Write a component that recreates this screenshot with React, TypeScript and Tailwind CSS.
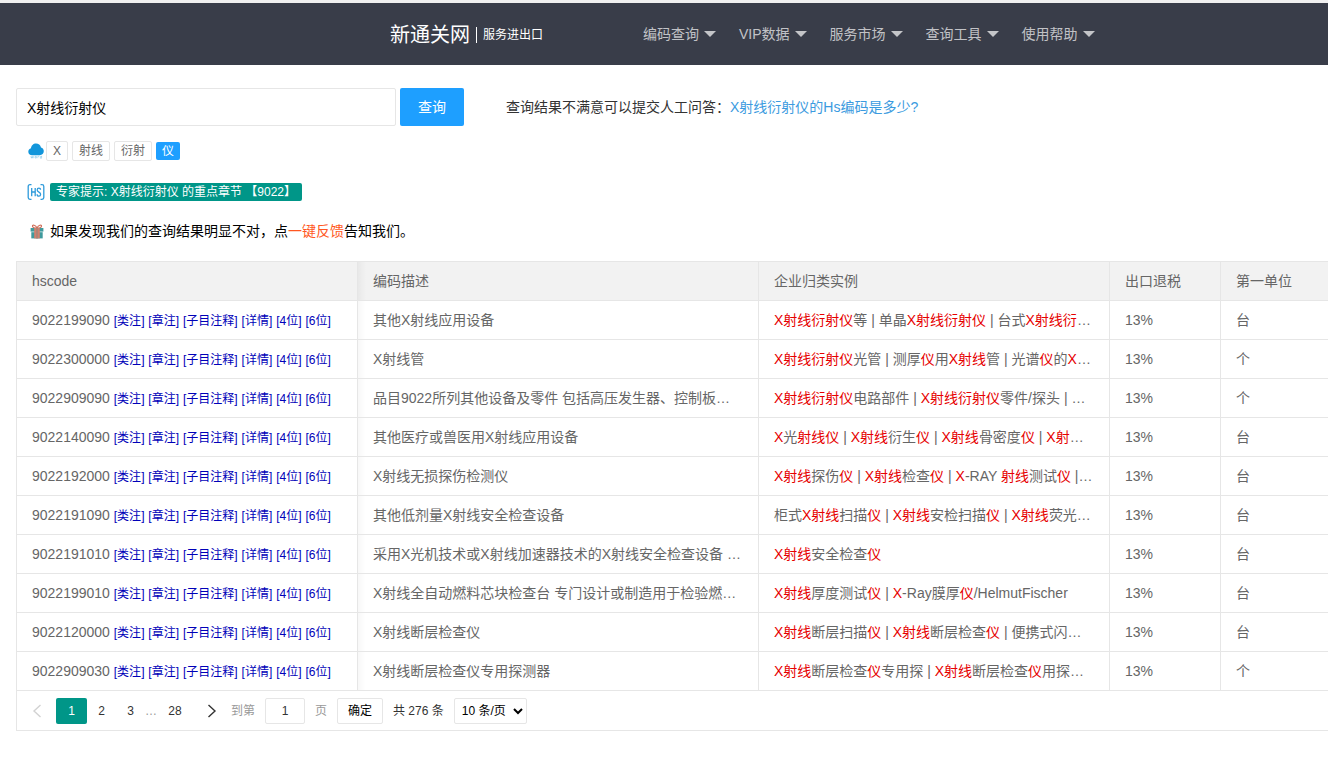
import { Fragment, useState } from "react";

type Row = {
  code: string;
  desc: string;
  // words between * are highlighted
  example: string;
  unit: string;
};

const navItems = ["编码查询", "VIP数据", "服务市场", "查询工具", "使用帮助"];
const noteLinks = ["类注", "章注", "子目注释", "详情", "4位", "6位"];
const words = ["X", "射线", "衍射", "仪"];

const rows: Row[] = [
  { code: "9022199090", desc: "其他X射线应用设备", example: "*X射线衍射仪*等 | 单晶*X射线衍射仪* | 台式*X射线衍*…", unit: "台" },
  { code: "9022300000", desc: "X射线管", example: "*X射线衍射仪*光管 | 测厚*仪*用*X射线*管 | 光谱*仪*的*X*…", unit: "个" },
  { code: "9022909090", desc: "品目9022所列其他设备及零件 包括高压发生器、控制板…", example: "*X射线衍射仪*电路部件 | *X射线衍射仪*零件/探头 | …", unit: "个" },
  { code: "9022140090", desc: "其他医疗或兽医用X射线应用设备", example: "*X*光*射线仪* | *X射线*衍生*仪* | *X射线*骨密度*仪* | *X射*…", unit: "台" },
  { code: "9022192000", desc: "X射线无损探伤检测仪", example: "*X射线*探伤*仪* | *X射线*检查*仪* | *X*-RAY *射线*测试*仪* |…", unit: "台" },
  { code: "9022191090", desc: "其他低剂量X射线安全检查设备", example: "柜式*X射线*扫描*仪* | *X射线*安检扫描*仪* | *X射线*荧光…", unit: "台" },
  { code: "9022191010", desc: "采用X光机技术或X射线加速器技术的X射线安全检查设备 …", example: "*X射线*安全检查*仪*", unit: "台" },
  { code: "9022199010", desc: "X射线全自动燃料芯块检查台 专门设计或制造用于检验燃…", example: "*X射线*厚度测试*仪* | *X*-Ray膜厚*仪*/HelmutFischer", unit: "台" },
  { code: "9022120000", desc: "X射线断层检查仪", example: "*X射线*断层扫描*仪* | *X射线*断层检查*仪* | 便携式闪…", unit: "台" },
  { code: "9022909030", desc: "X射线断层检查仪专用探测器", example: "*X射线*断层检查*仪*专用探 | *X射线*断层检查*仪*用探…", unit: "个" },
];

const Highlight = ({ text }: { text: string }) => (
  <>
    {text.split("*").map((part, i) =>
      i % 2 ? (
        <span key={i} className="text-[#e60000]">{part}</span>
      ) : (
        <Fragment key={i}>{part}</Fragment>
      )
    )}
  </>
);

const CloudIcon = () => (
  <svg viewBox="0 0 16 16" className="h-4 w-4 shrink-0" aria-hidden="true">
    <path d="M4 12.2C1.9 12.2.3 10.700.3 8.700c0-1.700 1.100-3 2.700-3.400C3.200 2.600 5.300.5 8 .5c2.500 0 4.400 1.500 5 3.900 1.700.4 2.800 1.900 2.800 3.700 0 2.400-1.700 4.100-4 4.100z" fill="#1296db" />
    <path d="M2.800 13.200l.7 2 .7-2 .7 2 .7-2M7 13.400h1.400v1.600H7zM9.800 15.200v-1.800h1.400M13.600 12.800v2.400h-1.300v-1.600h1.300" fill="none" stroke="#1296db" strokeWidth=".6" opacity=".5" />
  </svg>
);

const HsIcon = () => (
  <svg viewBox="0 0 18 18" className="h-[18px] w-[18px] shrink-0" fill="none" stroke="#2f9bdb" strokeWidth="1.3" aria-hidden="true">
    <path d="M4.500 1.700H3Q1.200 1.700 1.200 3.500v11Q1.200 16.300 3 16.300h1.500M13.500 1.700H15q1.800 0 1.800 1.800v11q0 1.800-1.800 1.800h-1.500" />
    <path d="M4.700 5v8.200M8.200 5v8.200M4.700 9h3.500M13.500 6.800c0-1.100-.6-1.700-1.600-1.700s-1.700.7-1.700 1.800c0 2.500 3.400 1.900 3.400 4.300 0 1.200-.7 1.900-1.700 1.900s-1.800-.7-1.800-1.900" />
  </svg>
);

const GiftIcon = () => (
  <svg viewBox="0 0 14 16" className="h-4 w-3.5 shrink-0" aria-hidden="true">
    <path d="M7 5C5.500 1.800 2.300 1.400 2.500 3.200 2.600 4.500 5 5 7 5c2 0 4.400-.5 4.500-1.800C11.700 1.400 8.500 1.800 7 5z" fill="none" stroke="#d0705c" strokeWidth="1.200" />
    <path d="M.6 5h12.800v3.600H.6z" fill="#3f9a9d" />
    <path d="M1.300 9.200h11.400v6.200H1.300z" fill="#3f9a9d" />
    <path d="M4.200 5h5.600v10.400H4.200z" fill="#d1806c" />
    <path d="M6.200 5h1.600v10.400H6.200z" fill="#a58478" />
  </svg>
);

const Chevron = ({ d }: { d: string }) => (
  <svg viewBox="0 0 12 14" className="h-3.5 w-3" fill="none" stroke="currentColor" strokeWidth="1.4" aria-hidden="true">
    <path d={d} />
  </svg>
);

const Header = () => (
  <header className="border-t-[3px] border-[#f0f0f0] bg-[#393d49]">
    <div className="mx-auto flex h-[62px] max-w-[964px] items-center whitespace-nowrap pl-52">
      <a href="#" className="flex items-center pt-0.5 text-white">
        <span className="text-xl">新通关网</span>
        <span className="mx-1.5 h-4 w-px bg-white" />
        <span className="text-xs">服务进出口</span>
      </a>
      <nav className="ml-[100px] flex gap-[23px]">
        {navItems.map((item) => (
          <a key={item} href="#" className="flex items-center gap-[5px] text-sm text-white/70">
            {item}
            <span className="border-x-6 border-t-6 border-x-transparent border-t-white/70" />
          </a>
        ))}
      </nav>
    </div>
  </header>
);

const SearchArea = () => {
  const [keyword, setKeyword] = useState<string>("X射线衍射仪");
  const [active, setActive] = useState<string>("仪");

  return (
    <section className="text-sm text-black">
      <form className="flex items-center" onSubmit={(e) => e.preventDefault()}>
        <input
          type="text"
          aria-label="查询"
          value={keyword}
          onChange={(e) => setKeyword(e.target.value)}
          className="h-[38px] w-[380px] rounded-xs border border-[#e6e6e6] px-2.5"
        />
        <button type="submit" className="ml-1 h-[38px] w-16 rounded-xs bg-[#1e9fff] text-white">查询</button>
        <p className="ml-[42px] text-[#333]">
          查询结果不满意可以提交人工问答：
          <a href="#" className="text-[#3b9be0]">X射线衍射仪的Hs编码是多少?</a>
        </p>
      </form>
      <div className="mt-4 flex h-[18px] items-center pl-3 text-xs">
        <CloudIcon />
        <div className="ml-0.5 flex items-center gap-1">
          {words.map((word) => (
            <button
              key={word}
              type="button"
              onClick={() => setActive(word)}
              className={
                word === active
                  ? "h-[18px] rounded-xs bg-[#1e9fff] px-1.5 leading-[18px] text-white"
                  : "h-5 rounded-xs border border-[#e6e6e6] px-1.5 leading-[18px] text-[#666]"
              }
            >
              {word}
            </button>
          ))}
        </div>
      </div>
      <div className="mt-[23px] flex items-center gap-[5px] pl-[11px]">
        <HsIcon />
        <span className="h-[18px] rounded-xs bg-[#009688] px-1.5 text-xs leading-[18px] text-white">
          专家提示: X射线衍射仪 的重点章节 【9022】
        </span>
      </div>
      <div className="mt-5 flex items-center gap-1.5 pl-3.5">
        <GiftIcon />
        <p>
          如果发现我们的查询结果明显不对，点<a href="#" className="text-[#ff5722]">一键反馈</a>告知我们。
        </p>
      </div>
    </section>
  );
};

const Pagination = () => (
  <div className="flex h-10 items-center border-b border-[#e6e6e6] pl-[3px] text-xs text-[#333]">
    <button type="button" aria-label="上一页" disabled className="flex h-[26px] w-9 items-center justify-center text-[#d2d2d2]">
      <Chevron d="M8.500 1 2 7l6.500 6" />
    </button>
    <button type="button" className="h-[26px] w-[31px] rounded-xs bg-[#009688] text-white">1</button>
    <button type="button" className="h-[26px] w-[29px]">2</button>
    <button type="button" className="h-[26px] w-[29px]">3</button>
    <span className="text-[#999]">…</span>
    <button type="button" className="h-[26px] w-9">28</button>
    <button type="button" aria-label="下一页" className="flex h-[26px] w-9 items-center justify-center">
      <Chevron d="M3.500 1 10 7l-6.500 6" />
    </button>
    <label className="ml-0.5 flex items-center gap-2.5 text-[#999]">
      到第
      <input type="text" defaultValue="1" className="h-[26px] w-10 rounded-xs border border-[#e6e6e6] text-center text-[#333]" />
      页
    </label>
    <button type="button" className="ml-2.5 h-[26px] w-[46px] rounded-xs border border-[#e6e6e6] text-black">确定</button>
    <span className="ml-2.5">共 276 条</span>
    <select aria-label="每页条数" className="ml-2.5 h-[26px] rounded-xs border border-[#e6e6e6] bg-white p-[3px] text-black">
      <option>10 条/页</option>
    </select>
  </div>
);

const HsTable = () => (
  <div className="mt-5 border-l border-t border-[#e6e6e6]">
    <table className="w-full table-fixed border-separate border-spacing-0 text-left text-sm text-[#666] [&_td]:h-[39px] [&_td]:truncate [&_td]:border-b [&_td]:border-r [&_td]:border-[#e6e6e6] [&_td]:px-[15px] [&_td:last-child]:border-r-0 [&_th]:h-[39px] [&_th]:border-b [&_th]:border-r [&_th]:border-[#e6e6e6] [&_th]:px-[15px] [&_th]:font-normal [&_th:last-child]:border-r-0">
      <colgroup>
        <col className="w-[341px]" />
        <col className="w-[401px]" />
        <col className="w-[351px]" />
        <col className="w-[111px]" />
        <col />
      </colgroup>
      <thead className="bg-[#f2f2f2]">
        <tr>
          <th>hscode</th>
          <th className="bg-linear-to-r from-black/4 to-transparent to-[8px]">编码描述</th>
          <th>企业归类实例</th>
          <th>出口退税</th>
          <th>第一单位</th>
        </tr>
      </thead>
      <tbody>
        {rows.map((row) => (
          <tr key={row.code}>
            <td>
              {row.code}
              {noteLinks.map((note) => (
                <Fragment key={note}>
                  {" "}
                  <a href="#" className="text-xs text-[#0000b8]">[{note}]</a>
                </Fragment>
              ))}
            </td>
            <td className="bg-linear-to-r from-black/3 to-transparent to-[8px]">{row.desc}</td>
            <td><Highlight text={row.example} /></td>
            <td>13%</td>
            <td>{row.unit}</td>
          </tr>
        ))}
      </tbody>
    </table>
    <Pagination />
  </div>
);

const App = () => {
  return (
    <div className="min-h-screen bg-white font-['Liberation_Sans','Noto_Sans_CJK_SC',sans-serif]">
      <Header />
      <main className="pl-4 pt-[23px]">
        <SearchArea />
        <HsTable />
      </main>
    </div>
  );
};

export default App;
